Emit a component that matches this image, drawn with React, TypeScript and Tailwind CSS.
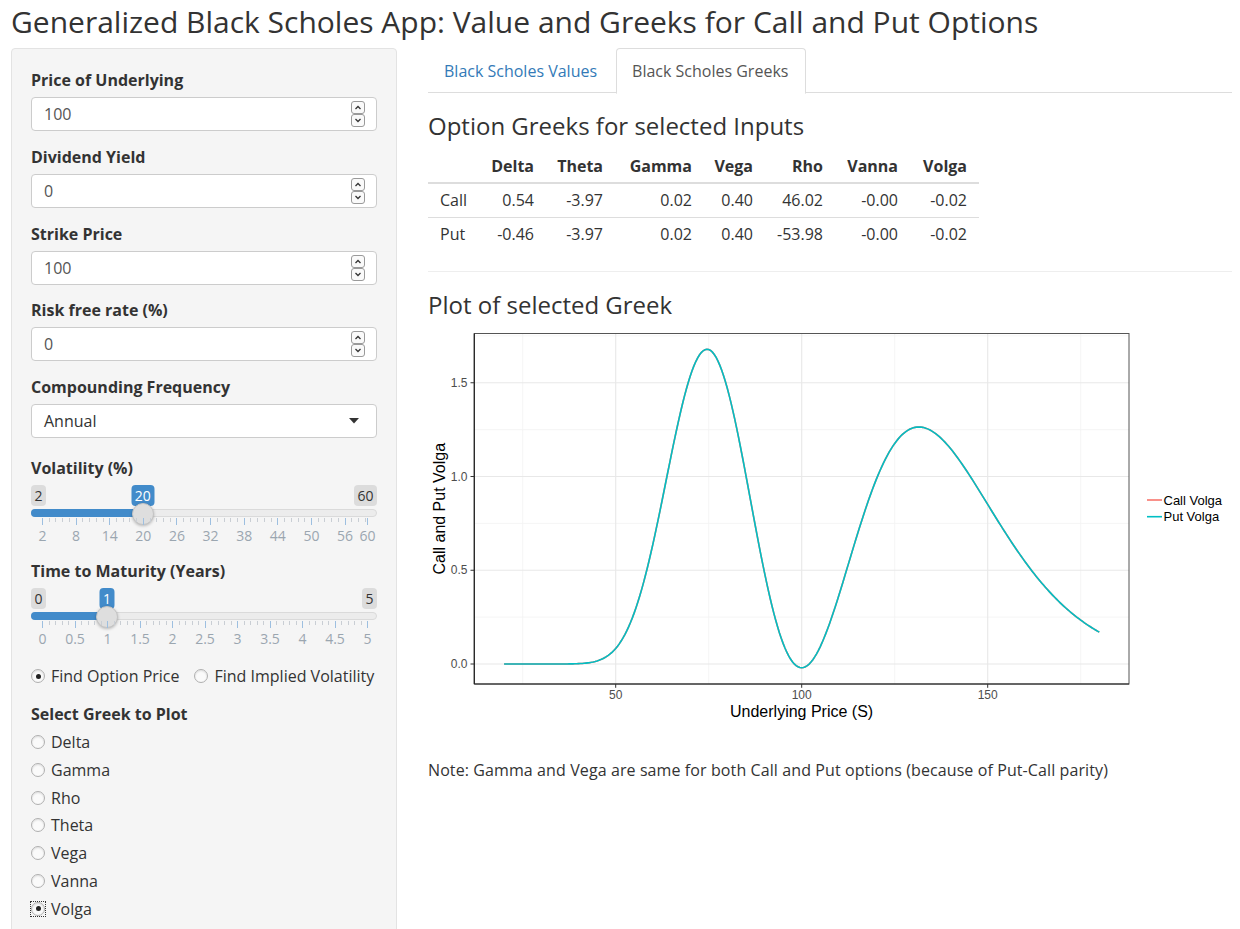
import React from "react";

const phi = (x: number) => Math.exp(-(x * x) / 2) / Math.sqrt(2 * Math.PI);
function volga(S: number) {
  const sig = 0.2;
  const d1 = (Math.log(S / 100) + 0.5 * sig * sig) / sig;
  const d2 = d1 - sig;
  return (phi(d1) * d1 * d2) / sig;
}
const PX = (s: number) => 187.7 + (s - 50) * 3.72;
const PY = (v: number) => 336 - 187.5 * v;

function buildPath() {
  const pts: string[] = [];
  for (let s = 20; s <= 180.0001; s += 0.5) {
    pts.push(`${pts.length === 0 ? "M" : "L"}${PX(s).toFixed(2)},${PY(volga(s)).toFixed(2)}`);
  }
  return pts.join(" ");
}

function Spinner() {
  return (
    <svg width="14" height="26" viewBox="0 0 14 26" className="shrink-0">
      <rect x="0.5" y="0.5" width="13" height="12" rx="2.5" fill="#fafafa" stroke="#9a9a9a" />
      <rect x="0.5" y="13.5" width="13" height="12" rx="2.5" fill="#fafafa" stroke="#9a9a9a" />
      <path d="M4.5 8 L7 5.5 L9.5 8" fill="none" stroke="#333" strokeWidth="1.3" />
      <path d="M4.5 18 L7 20.5 L9.5 18" fill="none" stroke="#333" strokeWidth="1.3" />
    </svg>
  );
}

function NumberGroup({ label, value }: { label: string; value: string }) {
  return (
    <div className="mb-[15.75px]">
      <div className="h-[20px] leading-[20px] text-[16px] font-bold text-[#333]">{label}</div>
      <div className="mt-[7px] h-[34px] bg-white border border-[#ccc] rounded-[4px] flex items-center justify-between pl-[12px] pr-[11px]">
        <span className="text-[16px] text-[#555]">{value}</span>
        <Spinner />
      </div>
    </div>
  );
}

function Radio({ checked, focus }: { checked?: boolean; focus?: boolean }) {
  const circle = (
    <span className="w-[14px] h-[14px] rounded-full border border-[#b0b0b0] bg-[#fafafa] shadow-[inset_0_1px_2px_rgba(0,0,0,0.12)] flex items-center justify-center shrink-0">
      {checked && <span className="w-[5px] h-[5px] rounded-full bg-[#222]" />}
    </span>
  );
  if (focus) {
    return (
      <span className="w-[16px] h-[16px] -ml-[1px] -mr-[1px] border border-dotted border-[#333] flex items-center justify-center shrink-0">
        {circle}
      </span>
    );
  }
  return circle;
}

type SliderProps = {
  min: number;
  max: number;
  value: number;
  majors: number[];
  minorStep: number;
  fmt: (v: number) => string;
};

function Slider({ min, max, value, majors, minorStep, fmt }: SliderProps) {
  const pos = (v: number) => 11 + ((v - min) / (max - min)) * 325;
  const minors: number[] = [];
  for (let v = min; v <= max + 1e-9; v += minorStep) {
    const r = Math.round(v * 1000) / 1000;
    if (!majors.some((m) => Math.abs(m - r) < 1e-6)) minors.push(r);
  }
  return (
    <div className="relative h-[62px] w-full">
      <div className="absolute left-0 top-0 h-[21px] leading-[21px] px-[3.5px] rounded-[4px] bg-[#dcdcdc] text-[14px] text-[#333]">
        {fmt(min)}
      </div>
      <div className="absolute right-0 top-0 h-[21px] leading-[21px] px-[3.5px] rounded-[4px] bg-[#dcdcdc] text-[14px] text-[#333]">
        {fmt(max)}
      </div>
      <div
        className="absolute top-0 h-[21px] leading-[21px] px-[3.5px] rounded-[4px] bg-[#428bca] text-[14px] text-white -translate-x-1/2"
        style={{ left: pos(value) }}
      >
        {fmt(value)}
      </div>
      <div className="absolute left-0 right-0 top-[24px] h-[8px] rounded-full bg-[#ececec] border border-[#dadada]" />
      <div className="absolute left-0 top-[24px] h-[8px] rounded-l-full bg-[#428bca]" style={{ width: pos(value) }} />
      <div
        className="absolute top-[17.5px] w-[22px] h-[22px] rounded-full bg-[#dedede] border border-[#c4c4c4] shadow-[0_1px_3px_rgba(0,0,0,0.25)] -translate-x-1/2"
        style={{ left: pos(value) }}
      />
      {majors.map((m) => (
        <div key={"M" + m} className="absolute top-[33px] w-[1px] h-[7px] bg-[#9dbfe0]" style={{ left: pos(m) }} />
      ))}
      {minors.map((m) => (
        <div key={"m" + m} className="absolute top-[33px] w-[1px] h-[4px] bg-[#c9ced4]" style={{ left: pos(m) }} />
      ))}
      {majors.map((m) => (
        <div
          key={"L" + m}
          className="absolute top-[42px] leading-[18px] text-[14px] text-[#9ba6b0] -translate-x-1/2"
          style={{ left: pos(m) + 0.5 }}
        >
          {fmt(m)}
        </div>
      ))}
    </div>
  );
}

function Sidebar() {
  const greeks = ["Delta", "Gamma", "Rho", "Theta", "Vega", "Vanna", "Volga"];
  return (
    <div className="w-[386px] shrink-0 h-[900px] bg-[#f5f5f5] border border-[#e3e3e3] rounded-[4px] px-[19px] pt-[21px]">
      <NumberGroup label="Price of Underlying" value="100" />
      <NumberGroup label="Dividend Yield" value="0" />
      <NumberGroup label="Strike Price" value="100" />
      <NumberGroup label="Risk free rate (%)" value="0" />
      <div>
        <div className="h-[20px] leading-[20px] text-[16px] font-bold text-[#333]">Compounding Frequency</div>
        <div className="mt-[7px] h-[34px] bg-white border border-[#ccc] rounded-[4px] flex items-center justify-between pl-[12px] pr-[17px]">
          <span className="text-[16px] text-[#333]">Annual</span>
          <svg width="10" height="6" viewBox="0 0 10 6">
            <path d="M0 0 L10 0 L5 5.5 Z" fill="#333" />
          </svg>
        </div>
      </div>
      <div className="mt-[20px] h-[20px] leading-[20px] text-[16px] font-bold text-[#333]">Volatility (%)</div>
      <div className="mt-[7px]">
        <Slider
          min={2}
          max={60}
          value={20}
          majors={[2, 8, 14, 20, 26, 32, 38, 44, 50, 56, 60]}
          minorStep={1.2}
          fmt={(v) => String(v)}
        />
      </div>
      <div className="mt-[14px] h-[20px] leading-[20px] text-[16px] font-bold text-[#333]">Time to Maturity (Years)</div>
      <div className="mt-[7px]">
        <Slider
          min={0}
          max={5}
          value={1}
          majors={[0, 0.5, 1, 1.5, 2, 2.5, 3, 3.5, 4, 4.5, 5]}
          minorStep={0.1}
          fmt={(v) => String(v)}
        />
      </div>
      <div className="mt-[16px] h-[20px] flex items-center text-[16px] text-[#333]">
        <Radio checked />
        <span className="ml-[6px]">Find Option Price</span>
        <span className="ml-[15px]">
          <Radio />
        </span>
        <span className="ml-[6px]">Find Implied Volatility</span>
      </div>
      <div className="mt-[18px] h-[20px] leading-[20px] text-[16px] font-bold text-[#333]">Select Greek to Plot</div>
      <div className="mt-[8px] flex flex-col gap-[7.83px]">
        {greeks.map((g) => (
          <div key={g} className="h-[20px] flex items-center text-[16px] text-[#333]">
            <Radio checked={g === "Volga"} focus={g === "Volga"} />
            <span className="ml-[6px]">{g}</span>
          </div>
        ))}
      </div>
    </div>
  );
}

function GreeksTable() {
  const cols = ["", "Delta", "Theta", "Gamma", "Vega", "Rho", "Vanna", "Volga"];
  const rows = [
    ["Call", "0.54", "-3.97", "0.02", "0.40", "46.02", "-0.00", "-0.02"],
    ["Put", "-0.46", "-3.97", "0.02", "0.40", "-53.98", "-0.00", "-0.02"],
  ];
  const grid = "grid grid-cols-[51px_67px_69px_89px_61px_70px_75px_69px] w-[551px]";
  return (
    <div className="text-[16px] text-[#333]">
      <div className={grid + " border-b-2 border-[#ddd]"}>
        {cols.map((c, i) => (
          <div key={i} className="pl-[8px] pr-[12px] pt-[6px] pb-[6px] leading-[20px] font-bold text-right whitespace-nowrap">
            {c}
          </div>
        ))}
      </div>
      {rows.map((r, ri) => (
        <div key={ri} className={grid + (ri > 0 ? " border-t border-[#ddd]" : "")}>
          {r.map((c, i) => (
            <div
              key={i}
              className={
                "py-[6.5px] leading-[20px] whitespace-nowrap " + (i === 0 ? "text-left pl-[12px]" : "text-right pl-[4px] pr-[12px]")
              }
            >
              {c}
            </div>
          ))}
        </div>
      ))}
    </div>
  );
}

function Plot() {
  const path = buildPath();
  const vMajor = [50, 100, 150];
  const vMinor = [25, 75, 125, 175];
  const hMajor = [0, 0.5, 1, 1.5];
  const hMinor = [0.25, 0.75, 1.25, 1.75];
  const font = "'Liberation Sans', Arial, sans-serif";
  return (
    <svg width="804" height="400" viewBox="0 0 804 400" className="block">
      <rect x="0" y="0" width="804" height="400" fill="#fff" />
      <rect x="46.3" y="5.5" width="654.7" height="350.5" fill="#fff" />
      {vMinor.map((s) => (
        <line key={"vm" + s} x1={PX(s)} x2={PX(s)} y1="5.5" y2="356" stroke="#f2f2f2" strokeWidth="0.8" />
      ))}
      {hMinor.map((v) => (
        <line key={"hm" + v} x1="46.3" x2="701" y1={PY(v)} y2={PY(v)} stroke="#f2f2f2" strokeWidth="0.8" />
      ))}
      {vMajor.map((s) => (
        <line key={"vM" + s} x1={PX(s)} x2={PX(s)} y1="5.5" y2="356" stroke="#e8e8e8" strokeWidth="1.1" />
      ))}
      {hMajor.map((v) => (
        <line key={"hM" + v} x1="46.3" x2="701" y1={PY(v)} y2={PY(v)} stroke="#e8e8e8" strokeWidth="1.1" />
      ))}
      <path d={path} fill="none" stroke="#F8766D" strokeWidth="1.6" />
      <path d={path} fill="none" stroke="#00BFC4" strokeWidth="1.6" />
      <rect x="46.3" y="5.5" width="654.7" height="350.5" fill="none" stroke="#555" strokeWidth="1" />
      <line x1="46.3" x2="46.3" y1="5.5" y2="356" stroke="#222" strokeWidth="1.2" />
      <line x1="46.3" x2="701" y1="356" y2="356" stroke="#222" strokeWidth="1.2" />
      {hMajor.map((v) => (
        <g key={"yt" + v}>
          <line x1="42.5" x2="46.3" y1={PY(v)} y2={PY(v)} stroke="#333" strokeWidth="1" />
          <text x="39.5" y={PY(v) + 4.2} textAnchor="end" fontSize="12" fill="#4d4d4d" fontFamily={font}>
            {v.toFixed(1)}
          </text>
        </g>
      ))}
      {vMajor.map((s) => (
        <g key={"xt" + s}>
          <line x1={PX(s)} x2={PX(s)} y1="356" y2="359.8" stroke="#333" strokeWidth="1" />
          <text x={PX(s)} y="371" textAnchor="middle" fontSize="12" fill="#4d4d4d" fontFamily={font}>
            {s}
          </text>
        </g>
      ))}
      <text x="373.6" y="389" textAnchor="middle" fontSize="16" fill="#000" fontFamily={font}>
        Underlying Price (S)
      </text>
      <text transform="translate(17,180.7) rotate(-90)" textAnchor="middle" fontSize="16" fill="#000" fontFamily={font}>
        Call and Put Volga
      </text>
      <line x1="719" x2="734" y1="172" y2="172" stroke="#F8766D" strokeWidth="1.6" />
      <text x="735.5" y="176.6" fontSize="13" fill="#000" fontFamily={font}>
        Call Volga
      </text>
      <line x1="719" x2="734" y1="188.7" y2="188.7" stroke="#00BFC4" strokeWidth="1.6" />
      <text x="735.5" y="193.3" fontSize="13" fill="#000" fontFamily={font}>
        Put Volga
      </text>
    </svg>
  );
}

function Main() {
  return (
    <div className="w-[804px] shrink-0">
      <div className="flex border-b border-[#ddd] h-[45px]">
        <div className="h-[45px] border border-transparent px-[15px] pt-[12px] pb-[11px] leading-[20px] text-[16px] text-[#337ab7] mr-[3px]">
          Black Scholes Values
        </div>
        <div className="h-[46px] border border-[#ddd] border-b-white bg-white rounded-t-[4px] pl-[15px] pr-[17px] pt-[12px] pb-[11px] leading-[20px] text-[16px] text-[#555]">
          Black Scholes Greeks
        </div>
      </div>
      <h3 className="mt-[19.5px] mb-[11px] text-[24px] leading-[1.1] text-[#333]">Option Greeks for selected Inputs</h3>
      <GreeksTable />
      <div className="mt-[20px] border-t border-[#eee]" />
      <h3 className="mt-[20px] mb-[9.5px] text-[24px] leading-[1.1] text-[#333]">Plot of selected Greek</h3>
      <Plot />
      <div className="mt-[32px] leading-[20px] text-[16px] text-[#333] tracking-[0.1px]">
        Note: Gamma and Vega are same for both Call and Put options (because of Put-Call parity)
      </div>
    </div>
  );
}

export default function App() {
  return (
    <div
      className="w-[1240px] h-[929px] overflow-hidden bg-white text-[#333]"
      style={{ fontFamily: "'Open Sans', 'Noto Sans', sans-serif" }}
    >
      <div className="h-[48px] pl-[11px] pt-[5px]">
        <h2 className="text-[30px] leading-[1.1] text-[#333] whitespace-nowrap">
          Generalized Black Scholes App: Value and Greeks for Call and Put Options
        </h2>
      </div>
      <div className="flex pl-[11px] gap-[31px]">
        <Sidebar />
        <Main />
      </div>
    </div>
  );
}
